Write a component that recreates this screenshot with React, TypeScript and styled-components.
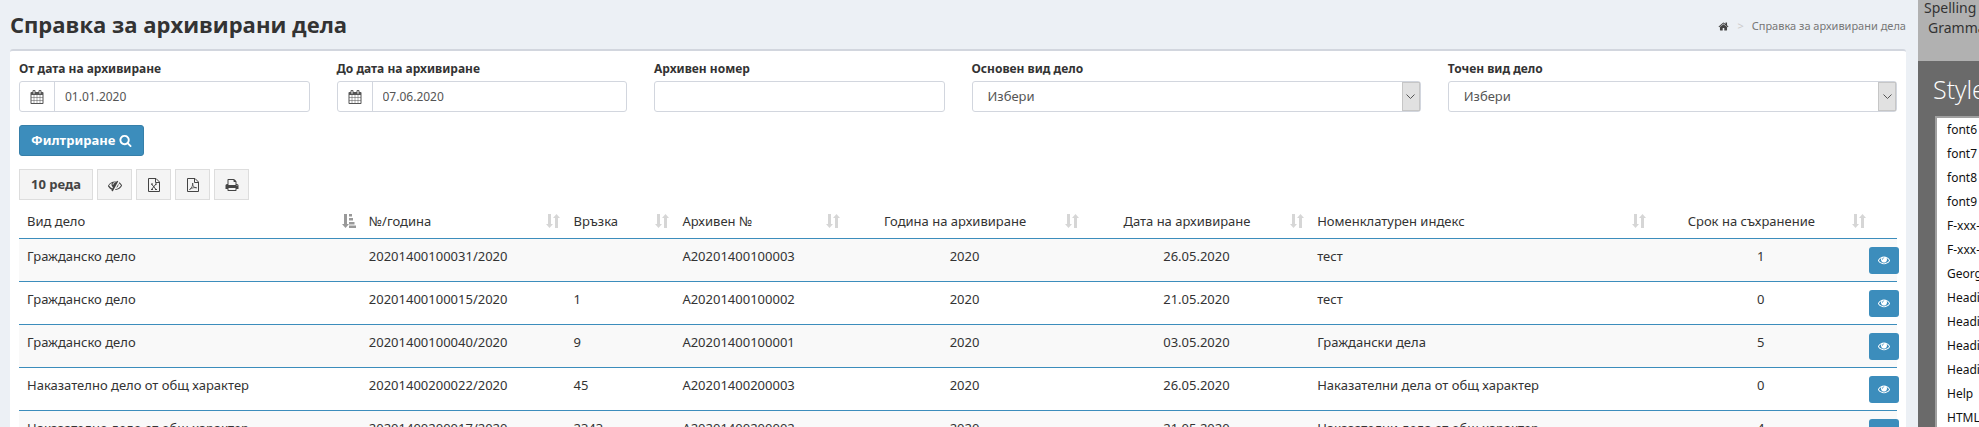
import React from "react";
import styled, { createGlobalStyle } from "styled-components";

const GlobalStyle = createGlobalStyle`
  *, *::before, *::after { box-sizing: border-box; }
  html { overflow: hidden; }
  body {
    margin: 0;
    background: #ecf0f5;
    color: #333;
    font: 13px/18px "Noto Sans", "Open Sans", sans-serif;
  }
  button, input, select { font: inherit; color: inherit; }
`;

const ICONS = {
  home: { w: 1664, d: "M1408 992v480q0 26-19 45t-45 19h-384v-384h-256v384h-384q-26 0-45-19t-19-45v-480q0-1 .5-3t.5-3l575-474 575 474q1 2 1 6zM1631 923l-62 74q-8 9-21 11h-3q-13 0-21-7l-692-577-692 577q-12 8-24 7-13-2-21-11l-62-74q-8-10-7-23.500t11-21.500l719-599q32-26 76-26t76 26l244 204v-195q0-14 9-23t23-9h192q14 0 23 9t9 23v408l219 182q10 8 11 21.500t-7 23.500z" },
  calendar: { w: 1664, d: "M128 1664h288v-288h-288v288zM480 1664h320v-288h-320v288zM128 1312h288v-320h-288v320zM480 1312h320v-320h-320v320zM128 928h288v-288h-288v288zM864 1664h320v-288h-320v288zM480 928h320v-288h-320v288zM1248 1664h288v-288h-288v288zM864 1312h320v-320h-320v320zM512 448v-288q0-13-9.500-22.500t-22.500-9.500h-64q-13 0-22.500 9.500t-9.500 22.500v288q0 13 9.500 22.500t22.500 9.500h64q13 0 22.500-9.500t9.500-22.500zM1248 1312h288v-320h-288v320zM864 928h320v-288h-320v288zM1248 928h288v-288h-288v288zM1280 448v-288q0-13-9.500-22.500t-22.500-9.500h-64q-13 0-22.500 9.500t-9.500 22.500v288q0 13 9.500 22.500t22.500 9.500h64q13 0 22.500-9.500t9.500-22.500zM1664 384v1280q0 52-38 90t-90 38h-1408q-52 0-90-38t-38-90v-1280q0-52 38-90t90-38h128v-96q0-66 47-113t113-47h64q66 0 113 47t47 113v96h384v-96q0-66 47-113t113-47h64q66 0 113 47t47 113v96h128q52 0 90 38t38 90z" },
  search: { w: 1664, d: "M1152 832q0-185-131.500-316.500t-316.500-131.500-316.500 131.500-131.500 316.500 131.500 316.500 316.500 131.500 316.500-131.500 131.500-316.500zM1664 1664q0 52-38 90t-90 38q-54 0-90-38l-343-342q-179 124-399 124-143 0-273.500-55.500t-225-150-150-225-55.500-273.500 55.500-273.500 150-225 225-150 273.500-55.500 273.500 55.500 225 150 150 225 55.500 273.500q0 220-124 399l343 343q37 37 37 90z" },
  eye: { w: 1792, d: "M1664 960q-152-236-381-353 61 104 61 225 0 185-131.500 316.500t-316.500 131.500-316.500-131.500-131.500-316.500q0-121 61-225-229 117-381 353 133 205 333.500 326.500t434.500 121.500 434.500-121.500 333.500-326.500zM944 576q0-20-14-34t-34-14q-125 0-214.500 89.500t-89.500 214.500q0 20 14 34t34 14 34-14 14-34q0-86 61-147t147-61q20 0 34-14t14-34zM1792 960q0 34-20 69-140 230-376.500 368.500t-499.500 138.500-499.500-139-376.500-368q-20-35-20-69t20-69q140-229 376.500-368t499.500-139 499.500 139 376.500 368q20 35 20 69z" },
  eyeSlash: { w: 1792, d: "M555 1335l78-141q-87-63-136-159t-49-203q0-121 61-225-229 117-381 353 167 258 427 375zM944 576q0-20-14-34t-34-14q-125 0-214.500 89.500t-89.500 214.500q0 20 14 34t34 14 34-14 14-34q0-86 61-147t147-61q20 0 34-14t14-34zM1307 449q0 7-1 9-106 189-316 567t-315 566l-49 89q-10 16-28 16-12 0-134-70-16-10-16-28 0-12 44-87-143-65-263.500-173t-208.500-245q-20-31-20-69t20-69q153-235 380-371t496-136q89 0 180 17l54-97q10-16 28-16 5 0 18 6t31 15.500 33 18.500 31.500 18.500 19.500 11.500q16 10 16 27zM1344 832q0 139-79 253.500t-209 164.500l280-502q8 45 8 84zM1792 960q0 35-20 69-39 64-109 145-150 172-347.500 267t-419.500 95l74-132q212-18 392.500-137t301.500-307q-115-179-282-294l63-112q95 64 182.500 153t144.500 184q20 34 20 69z" },
  print: { w: 1664, d: "M384 1536h896v-256h-896v256zM384 896h896v-384h-160q-40 0-68-28t-28-68v-160h-640v640zM1536 960q0-26-19-45t-45-19-45 19-19 45 19 45 45 19 45-19 19-45zM1664 960v416q0 13-9.500 22.500t-22.500 9.500h-224v160q0 40-28 68t-68 28h-960q-40 0-68-28t-28-68v-160h-224q-13 0-22.500-9.500t-9.500-22.500v-416q0-79 56.500-135.500t135.500-56.500h64v-544q0-40 28-68t68-28h672q40 0 88 20t76 48l152 152q28 28 48 76t20 88v256h64q79 0 135.500 56.500t56.500 135.500z" },
};

const Svg = styled.svg`
  display: inline-block;
  flex: none;
  fill: currentColor;
  vertical-align: -2px;
`;

function Icon({ name, size }: { name: keyof typeof ICONS; size: number }) {
  const icon = ICONS[name];
  return (
    <Svg width={size} height={size} viewBox={`${(icon.w - 1792) / 2} 0 1792 1792`} aria-hidden="true">
      <path d={icon.d} />
    </Svg>
  );
}

function FileIcon({ kind }: { kind: "excel" | "pdf" }) {
  return (
    <Svg width="14" height="14" viewBox="0 0 14 14" aria-hidden="true">
      <g fill="none" stroke="currentColor">
        <path d="M1.500 .5h7.500l3.500 3.500v9.500h-11z" />
        <path d="M8.500 .5v4h4" />
        {kind === "excel" ? (
          <path d="M4.500 6l4.500 5.500M9 6l-4.500 5.500M4 6h2M8 6h2M4 11.500h2M8 11.500h2" />
        ) : (
          <path d="M3.500 11.500c2-1 3.500-4 3.200-6.500c-.4 3 1.300 4.800 4 4.800c-2.500-.6-4.700 0-7.200 1.700" strokeWidth=".8" />
        )}
      </g>
    </Svg>
  );
}

const SortSvg = styled.svg<{ $active?: boolean }>`
  position: absolute;
  right: 5px;
  bottom: 10px;
  fill: ${(p) => (p.$active ? "#999" : "#d6d6d6")};
`;

function SortIcon({ active }: { active?: boolean }) {
  return (
    <SortSvg $active={active} width="14" height="14" viewBox="0 0 14 14" aria-hidden="true">
      <path d="M2 0h3v10h2l-3.500 4l-3.500-4h2z" />
      {active ? (
        <path d="M7 0h3v2.500h-3zM7 4h4v2.500h-4zM7 8h5.500v2.500h-5.500zM7 11.500h7v2.500h-7z" />
      ) : (
        <path d="M9 14h3v-10h2l-3.500-4l-3.500 4h2z" />
      )}
    </SortSvg>
  );
}

const Page = styled.div`
  display: flex;
  height: 100vh;
  overflow: hidden;
`;

const Main = styled.main`
  flex: 1;
  min-width: 0;
  padding: 0 12px 0 10px;
`;

const Header = styled.header`
  display: flex;
  justify-content: space-between;
  align-items: center;
  height: 49px;
`;

const Title = styled.h1`
  margin: 0;
  padding-bottom: 2px;
  font: 700 22px/28px "Open Sans", sans-serif;
`;

const Breadcrumb = styled.nav`
  display: flex;
  align-items: center;
  gap: 8px;
  padding-top: 3px;
  font-size: 11px;
  color: #777;

  a { color: #444; line-height: 11px; }
  i { color: #ccc; font-style: normal; }
`;

const Panel = styled.section`
  min-height: 100vh;
  padding: 10px 9px;
  background: #fff;
  border-top: 2px solid #d2d6de;
  border-radius: 3px 3px 0 0;
`;

const Filters = styled.form`
  display: grid;
  grid-template-columns: repeat(12, minmax(0, 1fr));
  column-gap: 27px;
  row-gap: 13px;
`;

const Field = styled.div<{ $span: number }>`
  grid-column: span ${(p) => p.$span};
`;

const Label = styled.label`
  display: block;
  margin-bottom: 4px;
  font-size: 12px;
  line-height: 16px;
  font-weight: 700;
`;

const Control = styled.div`
  display: flex;
  height: 31px;
  border: 1px solid #d2d6de;
  border-radius: 3px;
  color: #555;
`;

const Addon = styled.span`
  display: flex;
  align-items: center;
  justify-content: center;
  width: 35px;
  border-right: 1px solid #d2d6de;
`;

const Input = styled.input`
  flex: 1;
  min-width: 0;
  padding: 0 10px;
  border: 0;
  background: none;
  font-size: 12px;
`;

const Select = styled.select`
  flex: 1;
  min-width: 0;
  padding: 0 15px 2px;
  border: 0;
  background: none;
  appearance: none;
`;

const Arrow = styled.span`
  display: flex;
  align-items: center;
  justify-content: center;
  width: 18px;
  border: 1px solid #c6c6c6;
  background: #e1e1e1;
  pointer-events: none;
`;

const Submit = styled.button`
  grid-column: 1 / -1;
  justify-self: start;
  height: 31px;
  padding: 0 11px 2px;
  border: 1px solid #367fa9;
  border-radius: 3px;
  background: #3c8dbc;
  color: #fff;
  font-weight: 700;
`;

const Toolbar = styled.div`
  display: flex;
  gap: 4px;
  margin: 13px 0 7px;
`;

const Tool = styled.button<{ $text?: boolean }>`
  display: flex;
  align-items: center;
  justify-content: center;
  height: 31px;
  min-width: 35px;
  padding: ${(p) => (p.$text ? "0 11px 2px" : "0")};
  border: 1px solid #ddd;
  background: #f4f4f4;
  color: #444;
  font-weight: 700;
`;

const Table = styled.table`
  width: 100%;
  table-layout: fixed;
  border-collapse: collapse;
`;

const Th = styled.th<{ $center?: boolean }>`
  position: relative;
  height: 31px;
  padding: 0 27px 2px 8px;
  border-bottom: 1px solid #3c8dbc;
  font-weight: 400;
  text-align: ${(p) => (p.$center ? "center" : "left")};
  white-space: nowrap;
`;

const Row = styled.tr`
  height: 43px;
  border-bottom: 1px solid #3c8dbc;
  &:nth-child(odd) { background: #f9f9f9; }
`;

const Td = styled.td<{ $center?: boolean }>`
  padding: 8px 8px 0;
  vertical-align: top;
  white-space: nowrap;
  text-align: ${(p) => (p.$center ? "center" : "left")};
`;

const ActionCell = styled.td`
  padding: 8px 0 0;
  vertical-align: top;
`;

const View = styled.button`
  display: flex;
  align-items: center;
  justify-content: center;
  width: 30px;
  height: 27px;
  margin-left: -2px;
  padding: 0;
  border: 0;
  border-radius: 3px;
  background: #3c8dbc;
  color: #fff;
`;

const Side = styled.aside`
  flex: none;
  display: flex;
  flex-direction: column;
  width: 61px;
  overflow: hidden;
  background: #6a6a6a;
  white-space: nowrap;
`;

const SideTop = styled.div`
  flex: none;
  display: flex;
  flex-direction: column;
  gap: 4px;
  height: 61px;
  padding-left: 6px;
  background: #b1b1b1;
  color: #333;
  font-size: 14px;
  line-height: 16px;
`;

const SideLine = styled.span<{ $indent?: boolean }>`
  padding-left: ${(p) => (p.$indent ? "4px" : "0")};
`;

const SideTitle = styled.h2`
  flex: none;
  margin: 0;
  padding: 11px 0 10px 15px;
  color: #fff;
  font: 300 25px/34px "Open Sans", sans-serif;
`;

const StyleList = styled.ul`
  flex: 1;
  min-height: 0;
  margin: 0 0 0 17px;
  padding: 0 0 0 10px;
  border: solid #a0a0a0;
  border-width: 2px 0 0 2px;
  background: #fff;
  color: #111;
  font-size: 12px;
  line-height: 24px;
  list-style: none;
`;

const COLUMNS = [
  { title: "Вид дело", width: "18.2%" },
  { title: "№/година", width: "10.9%" },
  { title: "Връзка", width: "5.8%" },
  { title: "Архивен №", width: "9.1%" },
  { title: "Година на архивиране", width: "12.7%", center: true },
  { title: "Дата на архивиране", width: "12%", center: true },
  { title: "Номенклатурен индекс", width: "18.2%" },
  { title: "Срок на съхранение", width: "11.7%", center: true },
];

const ROWS = [
  ["Гражданско дело", "20201400100031/2020", "", "А20201400100003", "2020", "26.05.2020", "тест", "1"],
  ["Гражданско дело", "20201400100015/2020", "1", "А20201400100002", "2020", "21.05.2020", "тест", "0"],
  ["Гражданско дело", "20201400100040/2020", "9", "А20201400100001", "2020", "03.05.2020", "Граждански дела", "5"],
  ["Наказателно дело от общ характер", "20201400200022/2020", "45", "А20201400200003", "2020", "26.05.2020", "Наказателни дела от общ характер", "0"],
  ["Наказателно дело от общ характер", "20201400200017/2020", "2343", "А20201400200002", "2020", "21.05.2020", "Наказателни дела от общ характер", "4"],
];

const STYLES = ["font6", "font7", "font8", "font9", "F-xxx-", "F-xxx-", "Georgia", "Heading", "Heading", "Heading", "Heading", "Help", "HTML"];

function DateField({ id, label, value }: { id: string; label: string; value: string }) {
  return (
    <Field $span={2}>
      <Label htmlFor={id}>{label}</Label>
      <Control>
        <Addon><Icon name="calendar" size={14} /></Addon>
        <Input id={id} defaultValue={value} />
      </Control>
    </Field>
  );
}

function SelectField({ id, label }: { id: string; label: string }) {
  return (
    <Field $span={3}>
      <Label htmlFor={id}>{label}</Label>
      <Control>
        <Select id={id}><option>Избери</option></Select>
        <Arrow>
          <svg width="9" height="6" viewBox="0 0 9 6" fill="none" stroke="#555"><path d="M.5 .5l4 4l4-4" /></svg>
        </Arrow>
      </Control>
    </Field>
  );
}

export default function App() {
  return (
    <Page lang="bg">
      <GlobalStyle />
      <Main>
        <Header>
          <Title>Справка за архивирани дела</Title>
          <Breadcrumb>
            <a href="#home" aria-label="Начало"><Icon name="home" size={11} /></a>
            <i>&gt;</i>
            <span>Справка за архивирани дела</span>
          </Breadcrumb>
        </Header>
        <Panel>
          <Filters onSubmit={(e) => e.preventDefault()}>
            <DateField id="from" label="От дата на архивиране" value="01.01.2020" />
            <DateField id="to" label="До дата на архивиране" value="07.06.2020" />
            <Field $span={2}>
              <Label htmlFor="number">Архивен номер</Label>
              <Control><Input id="number" /></Control>
            </Field>
            <SelectField id="main-kind" label="Основен вид дело" />
            <SelectField id="exact-kind" label="Точен вид дело" />
            <Submit>Филтриране <Icon name="search" size={13} /></Submit>
          </Filters>
          <Toolbar>
            <Tool $text>10 реда</Tool>
            <Tool aria-label="Колони"><Icon name="eyeSlash" size={14} /></Tool>
            <Tool aria-label="Excel"><FileIcon kind="excel" /></Tool>
            <Tool aria-label="PDF"><FileIcon kind="pdf" /></Tool>
            <Tool aria-label="Печат"><Icon name="print" size={14} /></Tool>
          </Toolbar>
          <Table>
            <colgroup>
              {COLUMNS.map((c) => <col key={c.title} width={c.width} />)}
              <col />
            </colgroup>
            <thead>
              <tr>
                {COLUMNS.map((c, i) => (
                  <Th key={c.title} $center={c.center}>{c.title}<SortIcon active={i === 0} /></Th>
                ))}
                <Th as="td" />
              </tr>
            </thead>
            <tbody>
              {ROWS.map((row) => (
                <Row key={row[1]}>
                  {row.map((cell, i) => <Td key={i} $center={COLUMNS[i].center}>{cell}</Td>)}
                  <ActionCell><View aria-label="Преглед"><Icon name="eye" size={12} /></View></ActionCell>
                </Row>
              ))}
            </tbody>
          </Table>
        </Panel>
      </Main>
      <Side lang="en">
        <SideTop><SideLine>Spelling</SideLine><SideLine $indent>Grammar</SideLine></SideTop>
        <SideTitle>Styles</SideTitle>
        <StyleList>{STYLES.map((s, i) => <li key={i}>{s}</li>)}</StyleList>
      </Side>
    </Page>
  );
}
